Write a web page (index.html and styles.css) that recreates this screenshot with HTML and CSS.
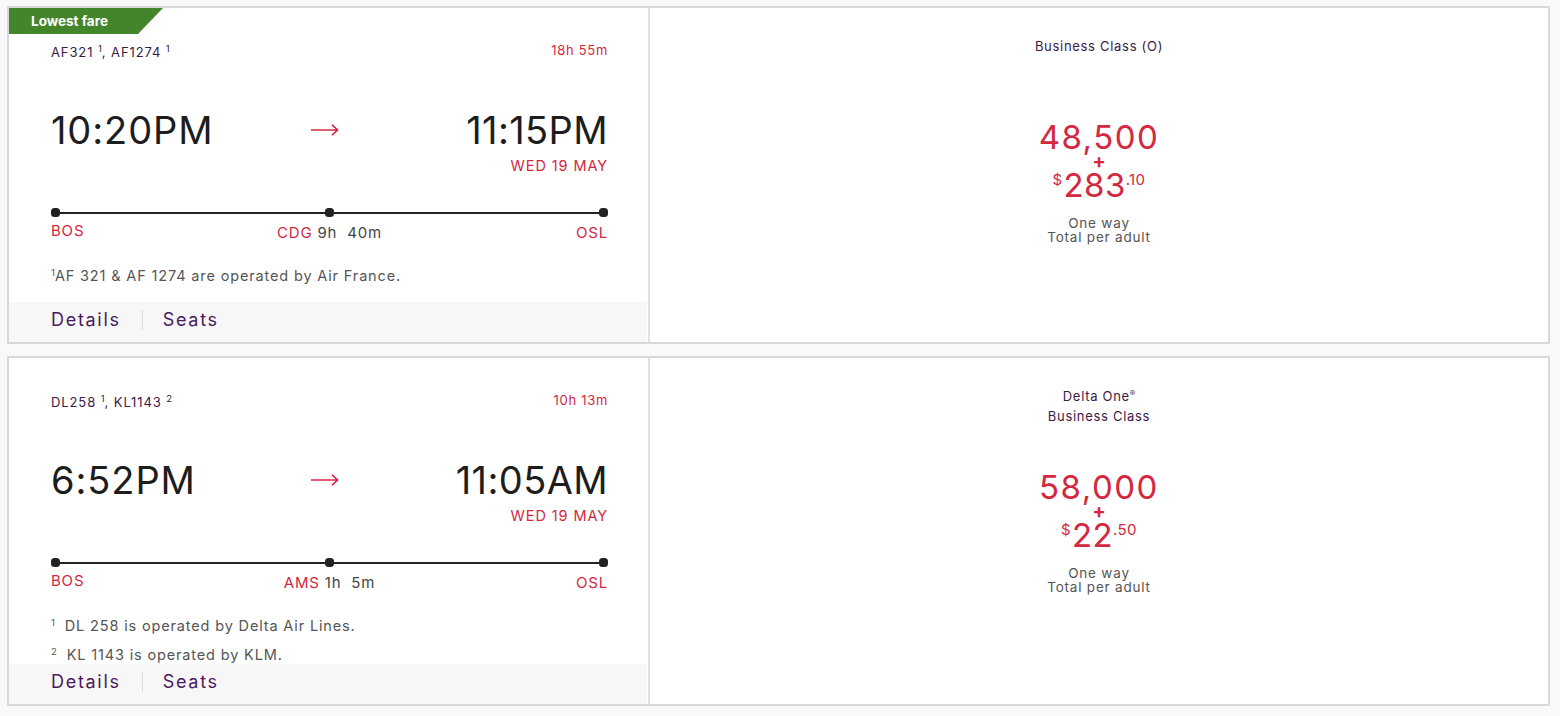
FILE: index.html
```html
<!DOCTYPE html>
<html lang="en">
<head>
<meta charset="utf-8">
<title>Flights</title>
<link rel="stylesheet" href="styles.css">
</head>
<body>
<div class="list">
  <div class="card card-first">
    <div class="badge">Lowest fare</div>
    <div class="flight">
      <div class="flight-main">
        <div class="head">
          <span class="codes">AF321 <sup>1</sup>, AF1274 <sup>1</sup></span>
          <span class="dur">18h 55m</span>
        </div>
        <div class="times">
          <div class="dep">10:20PM</div>
          <div class="arrow"><svg width="28" height="12" viewBox="0 0 28 12" aria-hidden="true"><path d="M0 6H26.5M21 0.8L26.6 6L21 11.2" fill="none" stroke="#d3283f" stroke-width="1.6"/></svg></div>
          <div class="arr">
            <div class="time">11:15PM</div>
            <div class="date">WED 19 MAY</div>
          </div>
        </div>
        <div class="track"><span class="dot"></span><span class="seg"></span><span class="dot"></span><span class="seg"></span><span class="dot"></span></div>
        <div class="stops">
          <span class="stop stop-first">BOS</span>
          <span class="stop stop-mid"><span class="code">CDG</span> 9h&nbsp; 40m</span>
          <span class="stop stop-last">OSL</span>
        </div>
        <div class="notes notes-single">
          <p class="note"><sup>1</sup>AF 321 &amp; AF 1274 are operated by Air France.</p>
        </div>
      </div>
      <div class="flight-foot"><a class="link">Details</a><span class="sep"></span><a class="link">Seats</a></div>
    </div>
    <div class="fare">
      <div class="cabin">Business Class (O)</div>
      <div class="points">48,500</div>
      <div class="plus">+</div>
      <div class="cash"><span class="cur">$</span>283<span class="cents">.10</span></div>
      <div class="per">One way<br>Total per adult</div>
    </div>
  </div>

  <div class="card card-second">
    <div class="flight">
      <div class="flight-main">
        <div class="head">
          <span class="codes">DL258 <sup>1</sup>, KL1143 <sup>2</sup></span>
          <span class="dur">10h 13m</span>
        </div>
        <div class="times">
          <div class="dep">6:52PM</div>
          <div class="arrow"><svg width="28" height="12" viewBox="0 0 28 12" aria-hidden="true"><path d="M0 6H26.5M21 0.8L26.6 6L21 11.2" fill="none" stroke="#d3283f" stroke-width="1.6"/></svg></div>
          <div class="arr">
            <div class="time">11:05AM</div>
            <div class="date">WED 19 MAY</div>
          </div>
        </div>
        <div class="track"><span class="dot"></span><span class="seg"></span><span class="dot"></span><span class="seg"></span><span class="dot"></span></div>
        <div class="stops">
          <span class="stop stop-first">BOS</span>
          <span class="stop stop-mid"><span class="code">AMS</span> 1h&nbsp; 5m</span>
          <span class="stop stop-last">OSL</span>
        </div>
        <div class="notes">
          <p class="note"><sup>1</sup>&nbsp; DL 258 is operated by Delta Air Lines.</p>
          <p class="note"><sup>2</sup>&nbsp; KL 1143 is operated by KLM.</p>
        </div>
      </div>
      <div class="flight-foot"><a class="link">Details</a><span class="sep"></span><a class="link">Seats</a></div>
    </div>
    <div class="fare">
      <div class="cabin">Delta One<sup>®</sup><br>Business Class</div>
      <div class="points">58,000</div>
      <div class="plus">+</div>
      <div class="cash"><span class="cur">$</span>22<span class="cents">.50</span></div>
      <div class="per">One way<br>Total per adult</div>
    </div>
  </div>
</div>
</body>
</html>
```

FILE: styles.css
```css
* { box-sizing: border-box; }

html, body {
  margin: 0;
  padding: 0;
  background: #f9f9f9;
  font-family: Inter, "Liberation Sans", sans-serif;
  color: #1d1d1d;
}

.list {
  padding: 6px 10px 10px 7px;
  display: flex;
  flex-direction: column;
  gap: 12px;
}

.card {
  position: relative;
  display: flex;
  border: 2px solid #d8d8d8;
  background: #fff;
}

.badge {
  position: absolute;
  left: 0;
  top: 0;
  width: 154px;
  height: 26px;
  padding-left: 22px;
  background: #43852b;
  color: #fff;
  font-size: 13.5px;
  font-weight: 700;
  line-height: 26px;
  clip-path: polygon(0 0, 100% 0, calc(100% - 25px) 100%, 0 100%);
}

.flight {
  width: 641px;
  flex: none;
  border-right: 2px solid #dde1e7;
  display: flex;
  flex-direction: column;
}

.flight-main {
  padding: 36px 40px 0 42px;
}

.head {
  display: flex;
  justify-content: space-between;
  align-items: flex-start;
  height: 16px;
}

.codes {
  font-size: 13px;
  line-height: 16px;
  color: #3b1a48;
  letter-spacing: 0.9px;
}

.codes sup,
.note sup {
  font-size: 9.5px;
  line-height: 0;
  vertical-align: 5px;
  letter-spacing: 0;
}

.dur {
  font-size: 13px;
  line-height: 16px;
  color: #d3283f;
  letter-spacing: 0.7px;
  margin-top: -2px;
}

.times {
  display: grid;
  grid-template-columns: 1fr auto 1fr;
  align-items: start;
  margin-top: 47px;
}

.dep,
.time {
  font-size: 38px;
  line-height: 46px;
  font-weight: 400;
  letter-spacing: 0.9px;
  color: #1d1d1d;
}

.time {
  letter-spacing: 0.4px;
}

.arrow {
  display: flex;
  align-items: center;
  height: 46px;
  margin-right: 10px;
}

.arrow svg { display: block; }

.arr {
  text-align: right;
}

.date {
  margin-top: 4px;
  font-size: 14.5px;
  line-height: 18px;
  color: #d3283f;
  letter-spacing: 0.9px;
}

.track {
  display: flex;
  align-items: center;
  margin-top: 33px;
  height: 9px;
}

.dot {
  width: 9px;
  height: 9px;
  border-radius: 3.5px;
  background: #222;
  flex: none;
}

.seg {
  flex: 1;
  height: 2px;
  background: #222;
}

.stops {
  display: grid;
  grid-template-columns: 1fr auto 1fr;
  align-items: start;
  margin-top: 7px;
  font-size: 15px;
  line-height: 18px;
  letter-spacing: 0.8px;
}

.stop { color: #d3283f; }
.stop-first { margin-top: -2px; }
.stop-mid { color: #444; text-align: center; }
.stop-mid .code { color: #d3283f; }
.stop-last { text-align: right; }

.notes {
  margin-top: 25px;
}

.notes-single {
  margin-bottom: 17px;
}

.note {
  margin: 0;
  font-size: 14.5px;
  line-height: 18px;
  color: #555;
  letter-spacing: 0.85px;
}

.note + .note {
  margin-top: 11px;
}

.flight-foot {
  display: flex;
  align-items: center;
  height: 40px;
  padding: 0 0 4px 42px;
  background: #f7f7f7;
  margin-right: 1px;
}

.link {
  font-size: 18px;
  line-height: 22px;
  color: #4b1a5e;
  letter-spacing: 1.7px;
  cursor: pointer;
}

.sep {
  width: 1px;
  height: 20px;
  background: #dcdcdc;
  margin: 0 20px 0 21px;
}

.fare {
  flex: 1;
  text-align: center;
  padding-top: 28px;
}

.cabin {
  height: 44px;
  font-size: 13px;
  line-height: 20px;
  color: #3b1a48;
  letter-spacing: 0.7px;
}

.cabin sup {
  font-size: 8px;
  line-height: 0;
  vertical-align: 5px;
  letter-spacing: 0;
}

.points {
  margin-top: 40px;
  font-size: 33px;
  line-height: 34px;
  color: #d3283f;
  letter-spacing: 1.5px;
}

.plus {
  font-size: 20px;
  line-height: 14px;
  font-weight: 700;
  color: #d3283f;
}

.cash {
  margin-top: 2px;
  font-size: 33px;
  line-height: 30px;
  color: #d3283f;
  letter-spacing: 0.4px;
}

.cur,
.cents {
  font-size: 15px;
  vertical-align: 12px;
  line-height: 0;
}

.cur { margin-right: 1px; }

.per {
  margin-top: 16px;
  font-size: 13.5px;
  line-height: 14px;
  color: #555;
  letter-spacing: 0.8px;
}
```
